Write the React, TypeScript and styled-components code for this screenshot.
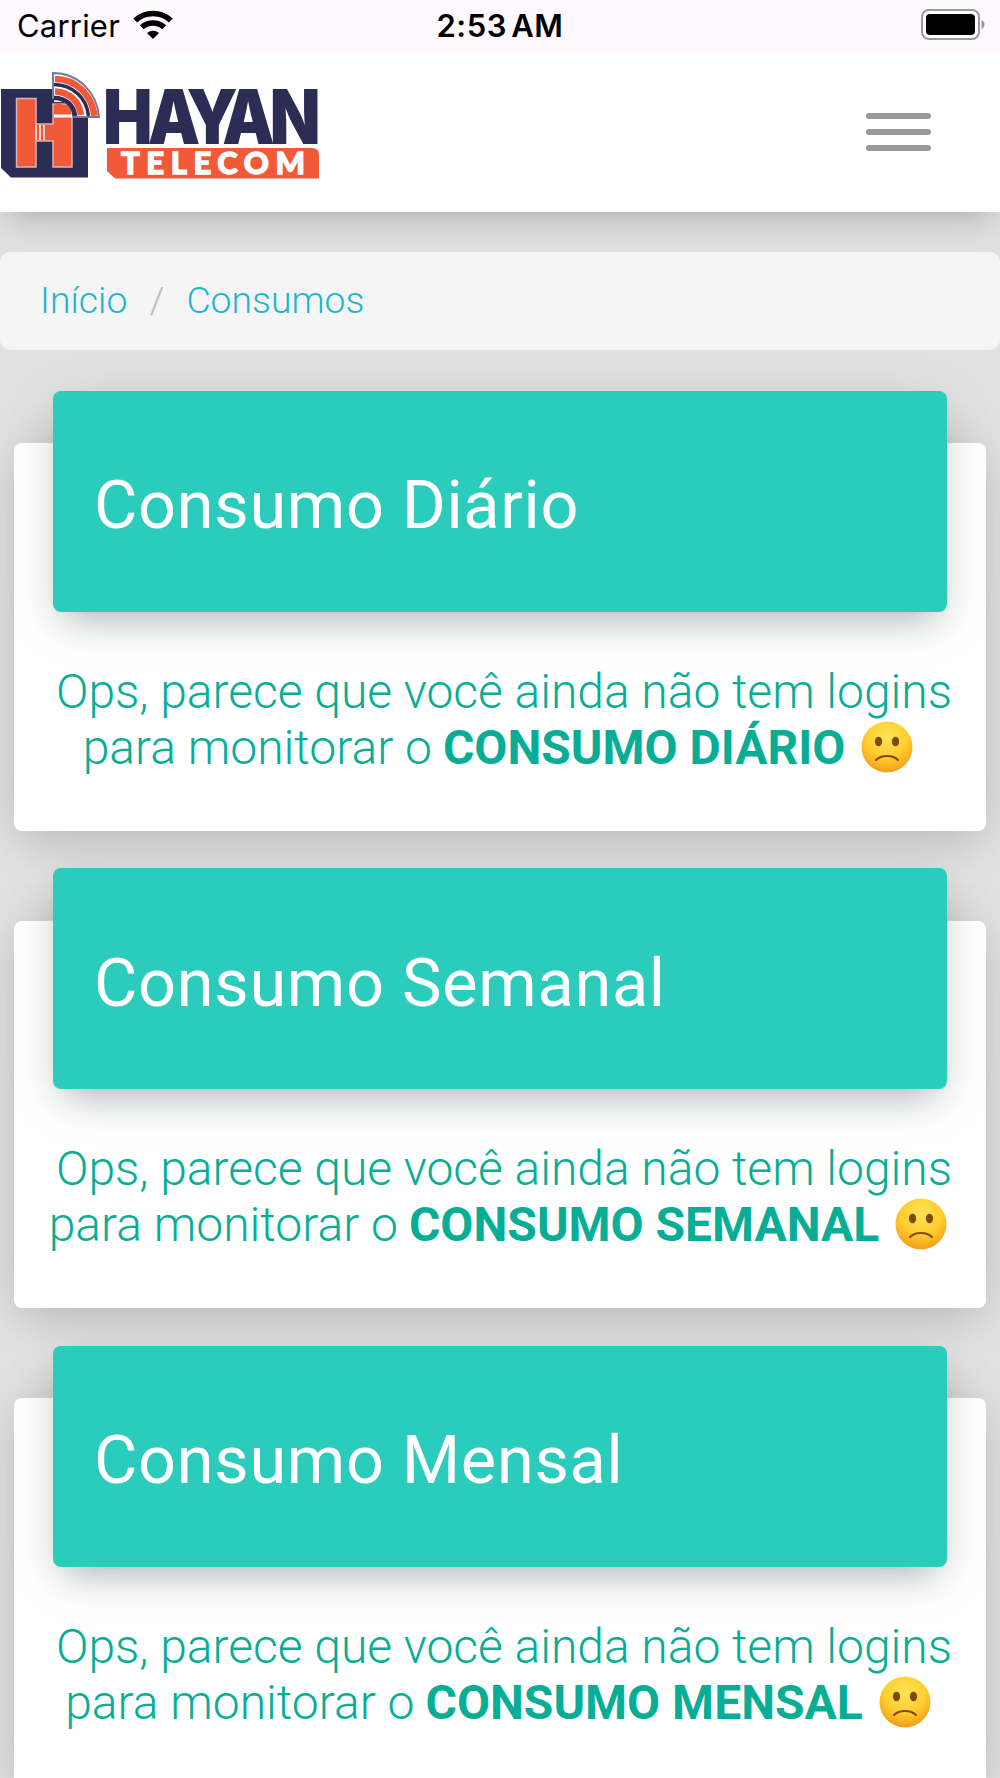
import React from "react";
import styled, { createGlobalStyle } from "styled-components";

const GlobalStyle = createGlobalStyle`
  *, *::before, *::after { box-sizing: border-box; }
  body {
    margin: 0;
    background: #e1e1e1;
    font-family: Roboto, "Liberation Sans", sans-serif;
  }
`;

const Screen = styled.div`
  width: 1000px;
  height: 1778px;
  overflow: hidden;
  background: #e1e1e1;
`;

const StatusBar = styled.div`
  position: relative;
  z-index: 2;
  display: grid;
  grid-template-columns: 1fr auto 1fr;
  align-items: center;
  height: 52px;
  padding: 0 15px 2px 17px;
  background: #fdf9ff;
  color: #000;
  font-family: Inter, "Liberation Sans", sans-serif;
  font-size: 31px;
`;

const Carrier = styled.div`
  display: flex;
  align-items: center;
  gap: 13px;
  letter-spacing: 0.2px;
`;

const Clock = styled.div`
  margin-right: 2px;
  font-weight: 600;
  font-size: 31px;
  letter-spacing: 0.5px;
  word-spacing: -4px;
`;

const BatterySlot = styled.div`
  display: flex;
  justify-content: flex-end;
`;

const NavBar = styled.header`
  position: relative;
  display: flex;
  align-items: center;
  justify-content: space-between;
  height: 160px;
  padding-right: 69px;
  background: #fff;
  box-shadow: 0 11px 48px 0 rgba(0, 0, 0, 0.07), 0 14px 27px -13px rgba(0, 0, 0, 0.22);
`;

const MenuButton = styled.button`
  display: flex;
  flex-direction: column;
  gap: 10px;
  padding: 0;
  margin-bottom: 1px;
  border: 0;
  background: none;
`;

const MenuBar = styled.span`
  width: 65px;
  height: 6px;
  border-radius: 3px;
  background: #999;
`;

const Breadcrumb = styled.nav`
  display: flex;
  align-items: center;
  height: 98px;
  margin-top: 40px;
  padding: 0 40px 2px;
  border-radius: 10px;
  background: #f5f5f5;
  position: relative;
  font-size: 37.33px;
  font-weight: 300;
`;

const Crumb = styled.a`
  color: #1fb5d0;
`;

const Divider = styled.span`
  width: 59px;
  text-align: center;
  color: #bbb;
`;

const Cards = styled.main`
  display: flex;
  flex-direction: column;
  gap: 90px;
  padding: 93.3px 14px 0;
`;

const Card = styled.section`
  height: 387.5px;
  flex: none;
  padding: 0 39px;
  border-radius: 8px;
  background: #fff;
  box-shadow: 0 16px 36px -10px rgba(0, 0, 0, 0.1), 0 5px 53px 0 rgba(0, 0, 0, 0.11);
`;

const CardHeader = styled.div`
  display: flex;
  align-items: center;
  height: 221px;
  margin-top: -52.5px;
  padding: 8px 41px 0;
  border-radius: 8px;
  background: #2bccbb;
  box-shadow: 0 11px 53px 0 rgba(0, 0, 0, 0.1), 0 18px 32px -14px rgba(20, 60, 60, 0.3);
`;

const CardTitle = styled.h4`
  margin: 0;
  color: #fff;
  font-size: 66.67px;
  font-weight: 400;
  letter-spacing: 0.7px;
  white-space: nowrap;
`;

const Message = styled.p`
  display: flex;
  flex-direction: column;
  align-items: center;
  margin: 52px -10px 0;
  color: #07ae95;
  font-size: 48px;
  font-weight: 300;
  line-height: 56px;
  white-space: nowrap;
`;

const Line = styled.span<{ $lead?: boolean }>`
  display: flex;
  align-items: center;
  padding: ${(p) => (p.$lead ? "0 0 0 8px" : "0 4px 0 0")};
  letter-spacing: ${(p) => (p.$lead ? "-0.03px" : "normal")};
`;

const Strong = styled.strong`
  margin-left: 11px;
  font-weight: 700;
`;

const Face = styled.svg`
  flex: none;
  margin: 0 0 2px 16px;
`;

const LogoMark = styled.svg`
  flex: none;
  margin-bottom: 12px;
  overflow: visible;
`;

function Logo() {
  return (
    <LogoMark width="322" height="112" viewBox="0 70 322 112">
      <path d="M1 89H54V102H88V177.500H11L1 168Z" fill="#2b2d55" />
      <path d="M16.500 98.500H36V124H53V104H72V167H53V141H36V167H16.500Z" fill="#f15a38" stroke="#d9b4b6" strokeWidth="1.500" />
      <path d="M36 125V140M40 125V140M44 125V140" stroke="#fff" strokeWidth="1.500" />
      <path d="M53 73C78 73 97 92 99 117H74C73 106 64 98 53 98Z" fill="#fff" stroke="#777a9a" strokeWidth="2" />
      <path d="M54 84.500C73 85 87 98 88.500 116" fill="none" stroke="#2b2d55" strokeWidth="3.500" />
      <path d="M55 79C76 79 92 95 94.500 116M55 91.500C69 92 79 101 81 115" fill="none" stroke="#f15a38" strokeWidth="6.500" />
      <path d="M54 98C67 98 74 106 75 116" fill="none" stroke="#2b2d55" strokeWidth="4.500" />
      <path d="M55 103C64 103 70 108 71 114H55Z" fill="#f15a38" />
      <path d="M54 116H72" stroke="#fff" strokeWidth="3" />
      <text
        x="117 168 212 252.500 306.500"
        y="144"
        transform="scale(0.88 1)"
        fontFamily="Inter, sans-serif"
        fontWeight="900"
        fontSize="75"
        fill="#2b2d55"
      >
        HAYAN
      </text>
      <path d="M107 148H312Q319 148 319 155V178.500H115L107 171Z" fill="#f15a38" />
      <text
        x="121"
        y="174"
        textLength="184"
        lengthAdjust="spacing"
        fontFamily="Lato, sans-serif"
        fontWeight="900"
        fontSize="31"
        fill="#fff"
        stroke="#fff"
        strokeWidth="1.300"
      >
        TELECOM
      </text>
    </LogoMark>
  );
}

function Wifi() {
  return (
    <svg width="40" height="30" viewBox="0 0 40 30">
      <g fill="none" stroke="#000" strokeWidth="5.500">
        <path d="M2.200 10.500C12 1.200 28 1.200 37.800 10.500" />
        <path d="M8.800 17.300C15 11.500 25 11.500 31.200 17.300" />
      </g>
      <path d="M14 23Q20 18.500 26 23L20 29Z" fill="#000" />
    </svg>
  );
}

function Battery() {
  return (
    <svg width="64" height="32" viewBox="0 0 64 32">
      <rect x="1" y="1" width="57" height="29" rx="7" fill="#fff" stroke="#9c999e" strokeWidth="2" />
      <rect x="5" y="5" width="49" height="21" rx="4" fill="#000" />
      <path d="M60.500 11Q63.500 12.500 63.500 15.500T60.500 20Z" fill="#9c999e" />
    </svg>
  );
}

function SadFace({ id }: { id: string }) {
  return (
    <Face width="52" height="52" viewBox="0 0 52 52">
      <defs>
        <radialGradient id={id} cx="0.5" cy="0.3" r="0.72">
          <stop offset="0" stopColor="#fee354" />
          <stop offset="0.55" stopColor="#fecf30" />
          <stop offset="1" stopColor="#f39a18" />
        </radialGradient>
      </defs>
      <circle cx="26" cy="26" r="25.500" fill={`url(#${id})`} />
      <ellipse cx="17.500" cy="20.500" rx="3.600" ry="4.800" fill="#80480c" />
      <ellipse cx="34.500" cy="20.500" rx="3.600" ry="4.800" fill="#80480c" />
      <path d="M15 39C20 33.500 32 33.500 37 39" fill="none" stroke="#80480c" strokeWidth="2" strokeLinecap="round" />
    </Face>
  );
}

const cards = [
  { title: "Consumo Diário", strong: "CONSUMO DIÁRIO" },
  { title: "Consumo Semanal", strong: "CONSUMO SEMANAL" },
  { title: "Consumo Mensal", strong: "CONSUMO MENSAL" },
];

export default function App() {
  return (
    <Screen>
      <GlobalStyle />
      <StatusBar>
        <Carrier>
          Carrier
          <Wifi />
        </Carrier>
        <Clock>2:53 AM</Clock>
        <BatterySlot>
          <Battery />
        </BatterySlot>
      </StatusBar>
      <NavBar>
        <Logo />
        <MenuButton aria-label="Menu">
          <MenuBar />
          <MenuBar />
          <MenuBar />
        </MenuButton>
      </NavBar>
      <Breadcrumb>
        <Crumb>Início</Crumb>
        <Divider>/</Divider>
        <Crumb>Consumos</Crumb>
      </Breadcrumb>
      <Cards>
        {cards.map((card, index) => (
          <Card key={card.title}>
            <CardHeader>
              <CardTitle>{card.title}</CardTitle>
            </CardHeader>
            <Message>
              <Line $lead>Ops, parece que você ainda não tem logins</Line>
              <Line>
                para monitorar o<Strong>{card.strong}</Strong>
                <SadFace id={`face-${index}`} />
              </Line>
            </Message>
          </Card>
        ))}
      </Cards>
    </Screen>
  );
}
